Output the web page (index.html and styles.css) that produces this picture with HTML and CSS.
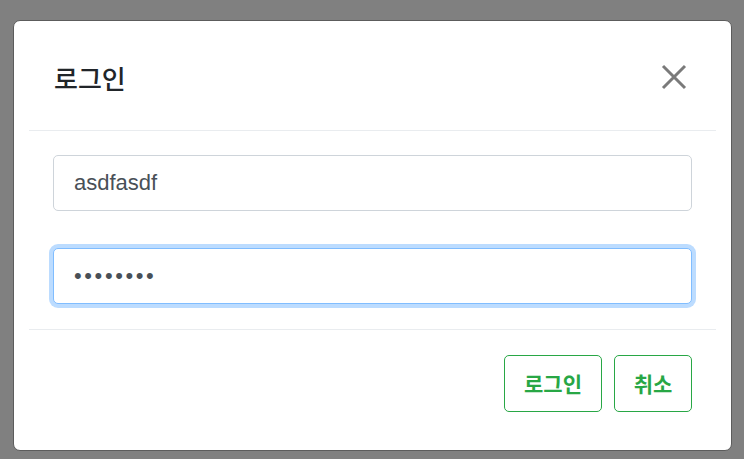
FILE: index.html
```html
<!DOCTYPE html>
<html lang="ko">
<head>
<meta charset="utf-8">
<link rel="stylesheet" href="styles.css">
</head>
<body>
<div class="backdrop">
  <div class="modal">
    <div class="modal-header">
      <h5 class="modal-title">로그인</h5>
      <button class="close" aria-label="Close">
        <svg width="26" height="26" viewBox="0 0 26 26"><path d="M2 2 L24 24 M24 2 L2 24" stroke="#7a7a7a" stroke-width="3" fill="none"/></svg>
      </button>
    </div>
    <div class="modal-body">
      <input class="form-control" type="text" value="asdfasdf">
      <input class="form-control focus" type="password" value="asdfasdf">
    </div>
    <div class="modal-footer">
      <button class="btn btn-login">로그인</button>
      <button class="btn btn-cancel">취소</button>
    </div>
  </div>
</div>
</body>
</html>
```

FILE: styles.css
```css
html, body {
  margin: 0;
  padding: 0;
  background: #808080;
}
.backdrop {
  width: 744px;
  height: 459px;
  padding: 20px 0 0 13px;
  box-sizing: border-box;
}
.modal {
  width: 719px;
  height: 431px;
  box-sizing: border-box;
  background: #fff;
  border: 1px solid #5c5c5c;
  border-radius: 7px;
  padding: 0 15px;
  font-family: "Noto Sans CJK KR", "Liberation Sans", sans-serif;
}
.modal-header {
  height: 110px;
  display: flex;
  align-items: center;
  justify-content: space-between;
  padding: 0 29px 0 25px;
  border-bottom: 1px solid #e9ecef;
  box-sizing: border-box;
}
.modal-title {
  margin: 0;
  font-size: 26px;
  font-weight: 500;
  color: #212529;
  line-height: 1;
  padding-top: 4px;
}
.close {
  border: 0;
  background: none;
  padding: 0;
  width: 26px;
  height: 26px;
  display: flex;
  margin-top: 2px;
}
.modal-body {
  padding: 24px 24px 25px;
  display: flex;
  flex-direction: column;
  gap: 37px;
  border-bottom: 1px solid #e9ecef;
}
.form-control {
  display: block;
  width: 100%;
  height: 56px;
  box-sizing: border-box;
  border: 1px solid #ced4da;
  border-radius: 5px;
  padding: 0 19px 0 20px;
  font-family: "Liberation Sans", Arial, sans-serif;
  font-size: 22px;
  color: #495057;
  background: #fff;
  outline: none;
  margin: 0;
}
.form-control.focus {
  border-color: #80bdff;
  box-shadow: 0 0 0 4px #bcdcff;
  letter-spacing: 2.6px;
}
.modal-footer {
  display: flex;
  justify-content: flex-end;
  gap: 12px;
  padding: 25px 24px 0;
}
.btn {
  height: 57px;
  padding: 0;
  border: 1px solid #28a745;
  border-radius: 5px;
  background: #fff;
  color: #28a745;
  font-family: "Noto Sans CJK KR", "Liberation Sans", sans-serif;
  font-size: 21px;
  font-weight: 700;
  line-height: 1;
}
.btn-login { width: 98px; }
.btn-cancel { width: 78px; }
```
